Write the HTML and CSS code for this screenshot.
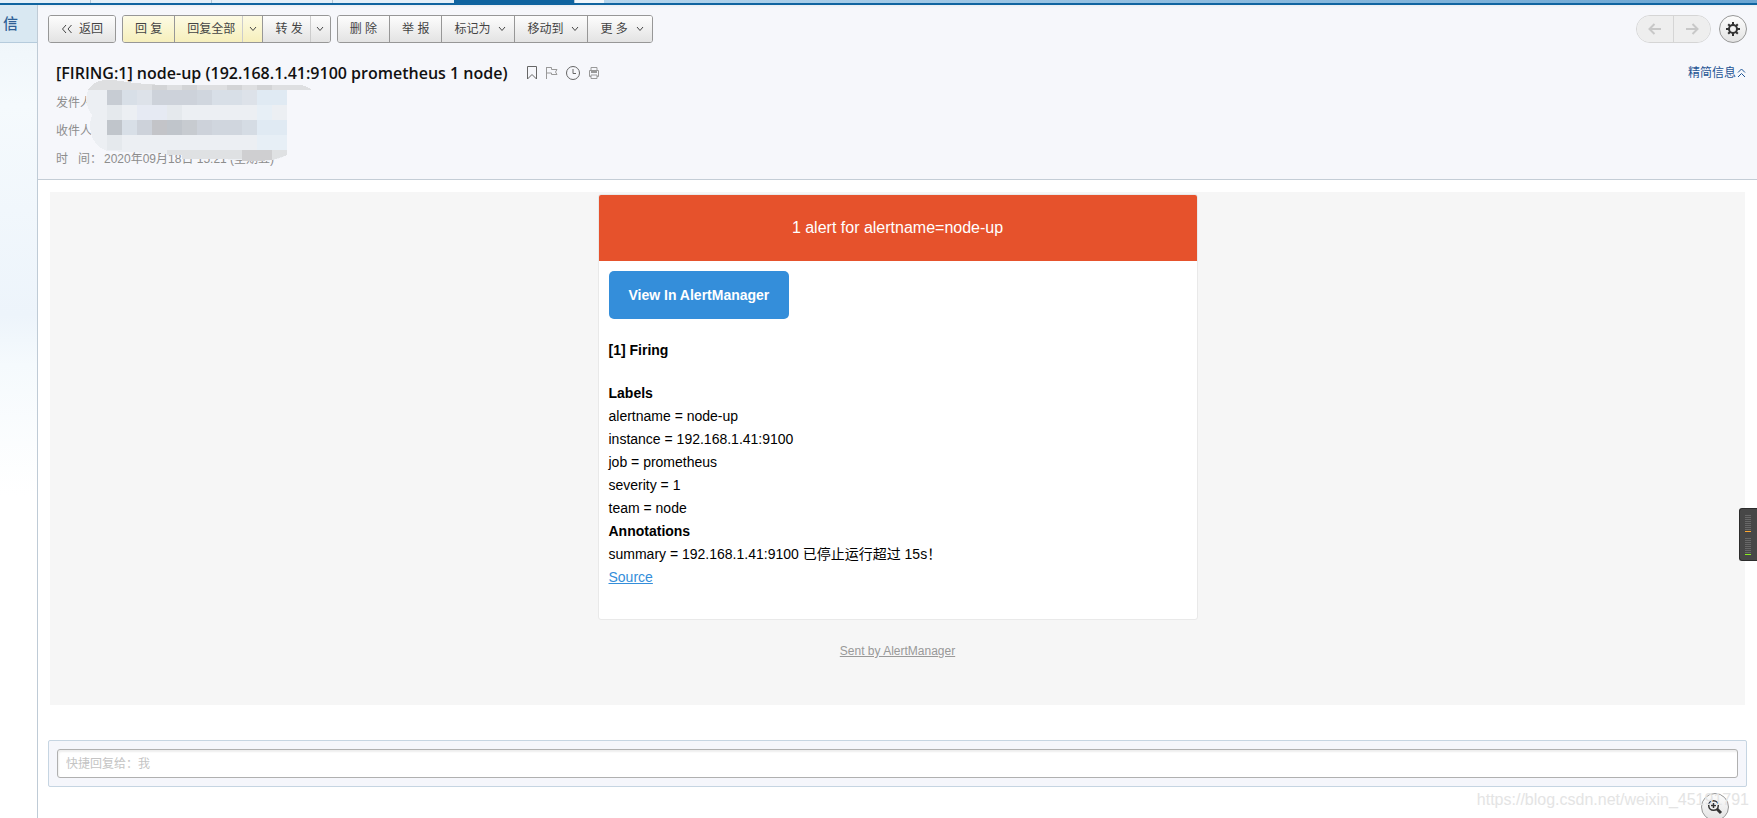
FILE: index.html
```html
<!DOCTYPE html>
<html lang="zh-CN">
<head>
<meta charset="utf-8">
<title>node-up</title>
<link rel="stylesheet" href="styles.css">
</head>
<body>
<div class="tabs"><i class="tab"></i><i class="tab"></i><i class="tab"></i><i class="tab last"></i><i class="tab current"></i><i class="gap"></i><i class="sky"></i></div>
<div class="app">
  <aside class="side"><div class="side-item">信</div></aside>
  <main class="main">
    <header class="head">
      <div class="toolbar">
        <div class="group"><button class="btn back"><svg width="12" height="10" viewBox="0 0 12 10"><path d="M5 1L1.500 5L5 9M10.500 1L7 5L10.500 9"/></svg>返回</button></div>
        <div class="group">
          <button class="btn yellow">回 复</button><button class="btn yellow all">回复全部</button><button class="btn yellow arrow" aria-label="回复选项"><svg width="8" height="6" viewBox="0 0 8 6"><path d="M1 1L4 4.500L7 1"/></svg></button><button class="btn forward">转 发</button><button class="btn arrow" aria-label="转发选项"><svg width="8" height="6" viewBox="0 0 8 6"><path d="M1 1L4 4.500L7 1"/></svg></button>
        </div>
        <div class="group">
          <button class="btn">删 除</button><button class="btn">举 报</button><button class="btn menu">标记为<svg width="8" height="6" viewBox="0 0 8 6"><path d="M1 1L4 4.500L7 1"/></svg></button><button class="btn menu">移动到<svg width="8" height="6" viewBox="0 0 8 6"><path d="M1 1L4 4.500L7 1"/></svg></button><button class="btn menu">更 多<svg width="8" height="6" viewBox="0 0 8 6"><path d="M1 1L4 4.500L7 1"/></svg></button>
        </div>
        <div class="pager">
          <button class="page" aria-label="上一封"><svg width="14" height="12" viewBox="0 0 14 12"><path d="M13 6H2M6.500 1L1.500 6L6.500 11"/></svg></button><button class="page" aria-label="下一封"><svg width="14" height="12" viewBox="0 0 14 12"><path d="M1 6H12M7.500 1L12.500 6L7.500 11"/></svg></button>
        </div>
        <button class="gear" aria-label="设置"><svg width="16" height="16" viewBox="0 0 16 16"><circle cx="8" cy="8" r="4"/><path d="M8 1V4M8 12V15M1 8H4M12 8H15M3.200 3.200L5 5M11 11L12.800 12.800M12.800 3.200L11 5M5 11L3.200 12.800"/></svg></button>
      </div>
      <div class="subject">
        <h1>[FIRING:1] node-up (192.168.1.41:9100 prometheus 1 node)</h1>
        <div class="marks">
          <svg width="14" height="16" viewBox="-1 0 14 16"><path d="M1.500 1.500H10.500V14L6 9.500L1.500 14Z"/></svg>
          <svg class="pale" width="14" height="16" viewBox="0 0 14 16"><path d="M1.500 2V14M1.500 2.500H6.500V4.500H12L10.500 7L12 9.500H6.500V8H1.500"/></svg>
          <svg width="16" height="16" viewBox="0 0 16 16"><circle cx="8" cy="8" r="6.500"/><path d="M8 4V8.500H11"/></svg>
          <svg class="pale" width="14" height="16" viewBox="-1 0 14 16"><path d="M3 5V2.500H9V5M3 11.500H1.500V5.500H10.500V11.500H9M3 7.500H9M3 6.500H9M3 10H9V13.500H3Z"/></svg>
        </div>
        <a class="brief" href="#">精简信息<svg width="9" height="10" viewBox="0 0 9 10"><path d="M1 4.500L4.500 1L8 4.500M1 9L4.500 5.500L8 9"/></svg></a>
      </div>
      <div class="meta">
        <p>发件人</p>
        <p>收件人</p>
        <p><span class="time-label">时&nbsp;&nbsp; 间：</span>2020年09月18日 15:21 (星期五)</p>
        <svg class="mosaic" width="232" height="84" viewBox="0 0 232 84" shape-rendering="crispEdges">
          <path fill="#dedfe1" d="M2 10Q8 1 18 0H28Q50 4 80 5H214Q222 6 226 10Z"/>
          <path fill="#eceff3" d="M2 10H201V75Q188 82 172 81Q120 79 86 74L21 71Q8 66 5 54Q3 42 6 35Q-3 22 2 10Z"/>
          <path fill="#d3d4d6" d="M66 5H81V10H66ZM96 5H111V10H96ZM141 5H156V10H141ZM171 5H186V10H171Z"/>
          <path fill="#c7ccd3" d="M21 10H36V25H21Z"/>
          <path fill="#d8dfe7" d="M36 10H51V25H36ZM126 10H171V25H126ZM36 40H51V55H36Z"/>
          <path fill="#dde2e9" d="M51 10H66V25H51ZM156 10H171V25H156Z"/>
          <path fill="#cdd2da" d="M66 10H111V25H66ZM51 40H66V55H51ZM111 40H126V55H111Z"/>
          <path fill="#d0d6de" d="M111 10H126V25H111ZM126 40H156V55H126Z"/>
          <path fill="#e0eaf3" d="M171 10H201V25H171ZM171 40H201V55H171Z"/>
          <path fill="#c0c5cb" d="M21 40H36V55H21ZM81 40H96V55H81Z"/>
          <path fill="#c3c4c8" d="M66 40H81V55H66Z"/>
          <path fill="#c7cbd0" d="M96 40H111V55H96Z"/>
          <path fill="#d5dce4" d="M156 40H171V55H156Z"/>
          <path fill="#e5e9ed" d="M21 25H36V40H21ZM21 55H36V70H21ZM81 25H96V40H81Z"/>
          <path fill="#e6eaf3" d="M51 25H81V40H51Z"/>
          <path fill="#e7eff6" d="M171 25H186V40H171ZM171 55H201V70H171Z"/>
          <path fill="#dfe1e3" d="M81 70H96V75H81ZM96 70H156V79H96ZM186 70H201V75L186 80Z"/>
          <path fill="#cfcfd1" d="M156 70H186V80L172 81H156Z"/>
        </svg>
      </div>
    </header>
    <div class="content">
      <section class="mail">
        <article class="card">
          <div class="banner">1 alert for alertname=node-up</div>
          <div class="card-body">
            <a class="view" href="#">View In AlertManager</a>
            <p class="firing"><strong>[1] Firing</strong></p>
            <p><strong>Labels</strong><br>alertname = node-up<br>instance = 192.168.1.41:9100<br>job = prometheus<br>severity = 1<br>team = node<br><strong>Annotations</strong><br>summary = 192.168.1.41:9100 已停止运行超过 15s！<br><a class="source" href="#">Source</a></p>
          </div>
        </article>
        <a class="sent" href="#">Sent by AlertManager</a>
      </section>
      <div class="reply"><input type="text" aria-label="快捷回复" placeholder="快捷回复给：我"></div>
    </div>
  </main>
</div>
<div class="meter"><i class="orange"></i><i class="green"></i></div>
<button class="zoom" aria-label="放大"><svg width="16" height="16" viewBox="0 0 16 16"><circle cx="6.500" cy="6.500" r="4.800"/><path d="M4 6.500H9M6.500 4V9"/><path class="handle" d="M10 10L14 14"/></svg></button>
<div class="watermark">https://blog.csdn.net/weixin_45191791</div>
</body>
</html>
```
FILE: styles.css
```css
* { box-sizing: border-box; }
body {
  margin: 0;
  min-height: 100vh;
  display: flex;
  flex-direction: column;
  overflow: hidden;
  position: relative;
  background: #fff;
  font: 12px/20px "Liberation Sans", "Noto Sans CJK SC", sans-serif;
}
p, h1 { margin: 0; }
button { font: inherit; cursor: pointer; }
svg { fill: none; stroke: currentColor; flex: none; }

.tabs { display: flex; height: 5px; border-bottom: 2px solid #1064a0; background: #e4eff8; }
.tab { width: 121px; border-right: 1px solid #b4c7d6; }
.tab:first-child { width: 91px; }
.tab.last { border: 0; }
.tab.current { background: #1064a0; }
.gap { width: 29px; background: #f0f6fb; }
.sky { flex: 1; background: linear-gradient(90deg, #b5d5ec, #6aa5d2); }

.app { flex: 1; display: flex; }
.side {
  width: 38px;
  border-right: 1px solid #bfcbd6;
  background: linear-gradient(#edf4f9, #f5fafd 100px, #edf4fb 310px, #f5fafd 360px, #fff 490px);
}
.side-item {
  height: 38px;
  padding: 9px 0 0 3px;
  border-bottom: 1px solid #b5cbdc;
  background: #d9e8f2;
  color: #2f5f96;
  font-size: 15px;
  font-weight: 500;
}
.main { flex: 1; min-width: 0; }
.head {
  padding: 10px 10px 6px;
  background: linear-gradient(#eceff3, #f6f7fb 3px);
  border-bottom: 1px solid #c4cdd6;
}

.toolbar { display: flex; gap: 6px; color: #444; }
.group {
  display: flex;
  height: 28px;
  border: 1px solid #979797;
  border-radius: 3px;
  overflow: hidden;
}
.btn {
  display: flex;
  align-items: center;
  justify-content: center;
  padding: 0 12px;
  border: 0;
  border-left: 1px solid #979797;
  background: linear-gradient(#fdfdfd, #e3e3e3);
  color: #444;
}
.btn:first-child { border-left: 0; }
.back { gap: 6px; }
.yellow { background: linear-gradient(#fdfbe4, #f6efbc); }
.yellow.all { padding: 0 7px 0 12px; }
.btn.forward { padding-right: 7px; }
.btn.arrow { width: 20px; padding: 0; border-left-color: #ccc; }
.menu { gap: 8px; padding-right: 8px; }
.pager {
  display: flex;
  width: 75px;
  height: 28px;
  margin-left: auto;
  border: 1px solid #d5d5d5;
  border-radius: 14px;
  overflow: hidden;
}
.page {
  flex: 1;
  display: flex;
  align-items: center;
  justify-content: center;
  padding: 0;
  border: 0;
  background: #eee;
  color: #c8c8c8;
}
.page svg { stroke-width: 2; }
.page + .page { border-left: 1px solid #d5d5d5; }
.gear, .zoom {
  display: flex;
  align-items: center;
  justify-content: center;
  width: 28px;
  height: 28px;
  padding: 0;
  border: 1px solid #979797;
  border-radius: 50%;
  background: linear-gradient(#fdfdfd, #e3e3e3);
  color: #333;
}
.gear { margin-left: 2px; }
.gear svg { stroke-width: 2; }

.subject { display: flex; align-items: center; height: 24px; margin: 18px 0 0 8px; }
h1 { font: 600 16px/24px "Open Sans", "Noto Sans CJK SC", sans-serif; color: #111; }
.marks { display: flex; align-items: center; gap: 6px; margin-left: 17px; color: #666; }
.marks .pale { color: #999; }
.brief { display: flex; align-items: center; gap: 1px; margin: 0 1px 0 auto; color: #1e5494; text-decoration: none; }

.meta { position: relative; margin: 4px 0 0 8px; color: #8d8d8d; line-height: 28px; }
.time-label { display: inline-block; width: 48px; white-space: nowrap; }
.mosaic { position: absolute; left: 30px; top: -9px; stroke: none; }

.content { padding: 12px 10px 0; }
.mail {
  display: flex;
  flex-direction: column;
  align-items: center;
  margin: 0 2px;
  padding: 2px 0 42px;
  background: #f6f6f6;
  font-size: 14px;
  line-height: 23px;
  color: #000;
}
.card {
  width: 600px;
  max-width: 100%;
  border: 1px solid #e9e9e9;
  border-radius: 3px;
  background: #fff;
  overflow: hidden;
}
.banner { padding: 20px; background: #e6522c; color: #fff; font-size: 16px; line-height: 26px; text-align: center; }
.card-body { padding: 10px 10px 30px; }
.view {
  display: inline-block;
  padding: 12px 20px;
  border-radius: 5px;
  background: #348eda;
  color: #fff;
  font-weight: bold;
  line-height: 24px;
  text-decoration: none;
  vertical-align: top;
}
.firing { padding: 20px 0; }
.source { color: #348eda; }
.sent { margin-top: 20px; color: #999; font-size: 12px; }

.reply {
  margin-top: 35px;
  padding: 8px;
  border: 1px solid #c6d5e2;
  border-radius: 2px;
  background: #f5f6fb;
}
.reply input {
  display: block;
  width: 100%;
  height: 29px;
  padding: 0 8px;
  border: 1px solid #b0b0b0;
  border-radius: 3px;
  background: #fff;
  box-shadow: inset 1px 2px 2px #eee;
  font: inherit;
}
.reply input::placeholder { color: #c4c4c4; }

.meter {
  position: absolute;
  right: 0;
  top: 508px;
  width: 18px;
  height: 53px;
  padding: 6px 5px;
  border: 1px solid #2c2c2c;
  border-right: 0;
  border-radius: 3px 0 0 3px;
  background: #474747;
}
.meter i {
  display: block;
  width: 6px;
  height: 17px;
  margin-bottom: 6px;
  border-bottom: 1px solid #ffa830;
  background: repeating-linear-gradient(#686868 0 1px, #474747 1px 2px);
}
.meter .green { border-color: #8af020; }
.zoom { position: absolute; right: 28px; bottom: -3px; }
.zoom svg { stroke-width: 1.5; }
.zoom .handle { stroke-width: 3; }
.watermark {
  position: absolute;
  right: 8px;
  bottom: 8px;
  color: #e4e4e4;
  font-size: 16px;
  pointer-events: none;
}
```
